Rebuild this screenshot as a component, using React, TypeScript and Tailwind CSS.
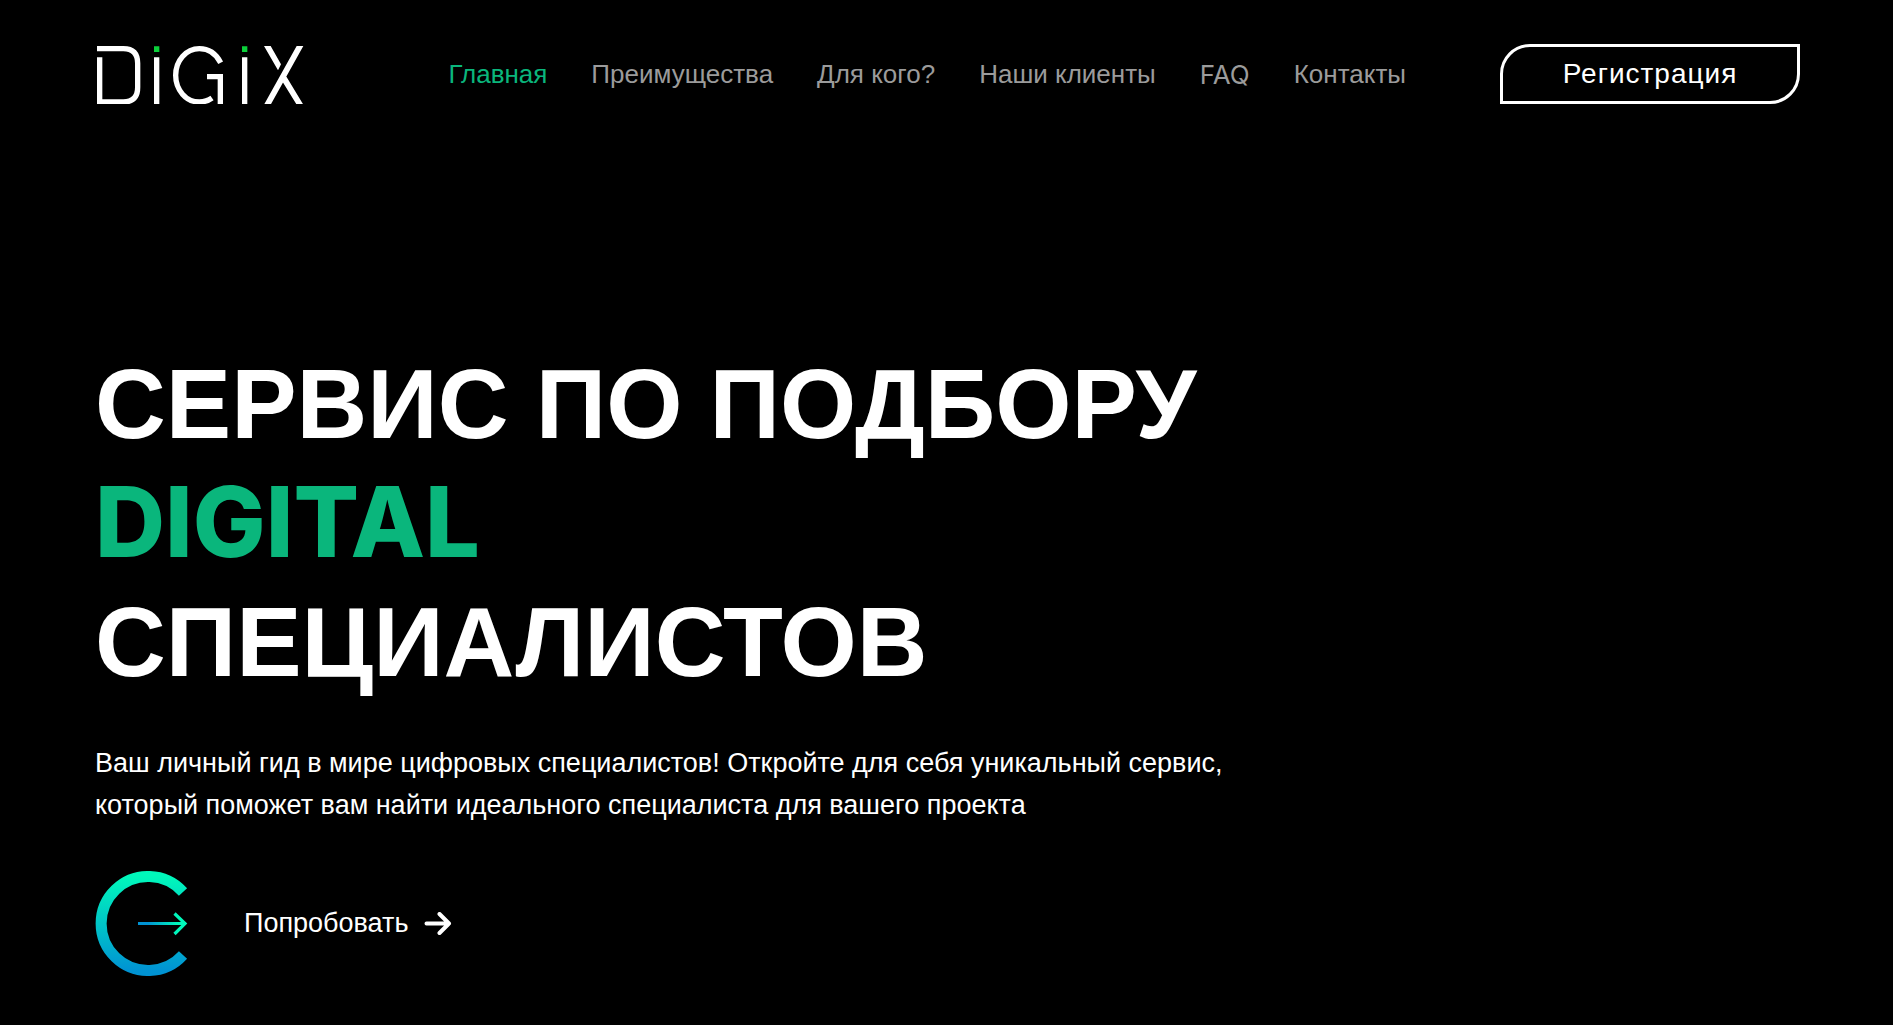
const navItems = [
  { label: "Главная", href: "#home", active: true },
  { label: "Преимущества", href: "#benefits" },
  { label: "Для кого?", href: "#audience" },
  { label: "Наши клиенты", href: "#clients" },
  { label: "FAQ", href: "#faq", latin: true },
  { label: "Контакты", href: "#contacts" },
];

function Logo() {
  return (
    <svg viewBox="45 42 630 180" className="h-[60px] w-[210px]" fill="none" role="img" aria-label="DiGiX">
      <g stroke="#fff" strokeWidth="16">
        <path d="M51 56H130Q173 56 173 100V172Q173 216 130 216H59V82" />
        <path d="M230 82V224M494 82V224" />
        <path d="M422 98C408 71 384 56 358 56C318 56 287 92 287 136C287 180 318 216 358 216C372 216 385 212 396 204" />
        <path d="M381 140H421V224" />
      </g>
      <path fill="#0bd03a" d="M222 49h16v17h-16zM486 49h16v17h-16z" />
      <path fill="#fff" d="M650 48h20L572 224h-20zM552 48h20l31 55-9 18zM613 130l57 94h-20l-47-76z" />
    </svg>
  );
}

function RingArrow() {
  return (
    <svg viewBox="0 0 93 105" className="h-[105px] w-[93px]" fill="none" aria-hidden="true">
      <defs>
        <linearGradient id="ring" x1="0" y1="0" x2="0" y2="105" gradientUnits="userSpaceOnUse">
          <stop offset="0.05" stopColor="#00f8bb" />
          <stop offset="0.95" stopColor="#0093d3" />
        </linearGradient>
        <linearGradient id="shaft" x1="43" y1="0" x2="92" y2="0" gradientUnits="userSpaceOnUse">
          <stop offset="0.2" stopColor="#0093d3" />
          <stop offset="0.8" stopColor="#00f8bb" />
        </linearGradient>
      </defs>
      <path d="M88 21A47 47 0 1 0 88 84" stroke="url(#ring)" strokeWidth="11" />
      <path d="M43 52.500H90M79.500 42.500L90 52.600L79.500 63" stroke="url(#shaft)" strokeWidth="3.200" />
    </svg>
  );
}

export default function App() {
  return (
    <div className="min-h-screen bg-black pr-[93px] pl-[95px] pt-11 font-['Liberation_Sans',Arial,sans-serif] text-white">
      <header className="flex items-center">
        <a href="#home" className="shrink-0"><Logo /></a>
        <nav className="mr-[94px] ml-auto flex gap-11 text-[26px] whitespace-nowrap">
          {navItems.map((item) => (
            <a
              key={item.href}
              href={item.href}
              className={
                item.active ? "text-[#0ab67c]" : item.latin ? "font-['Inter'] font-normal text-[#9b9b9b]" : "text-[#9b9b9b]"
              }
            >
              {item.label}
            </a>
          ))}
        </nav>
        <button className="h-[60px] w-[300px] shrink-0 rounded-tl-[30px] rounded-br-[30px] border-3 border-white text-[28px] tracking-[1px]">
          Регистрация
        </button>
      </header>

      <main className="pt-[241px]">
        <h1 className="text-[98px] leading-[119px] font-bold">
          СЕРВИС ПО ПОДБОРУ
          <br />
          <span className="font-['Inter'] text-[97px] leading-none font-extrabold text-[#0ab67c]">DIGITAL</span>
          <br />
          СПЕЦИАЛИСТОВ
        </h1>
        <p className="mt-10 max-w-[1140px] text-[27px] leading-[42px]">
          Ваш личный гид в мире цифровых специалистов! Откройте для себя уникальный сервис, который поможет вам найти
          идеального специалиста для вашего проекта
        </p>
        <div className="mt-[45px] flex items-center gap-14">
          <RingArrow />
          <a href="#try" className="flex items-center gap-4 text-[27px]">
            Попробовать
            <svg viewBox="0 0 28 24" className="h-6 w-7" fill="none" stroke="#fff" strokeWidth="4" strokeLinecap="round" strokeLinejoin="round" aria-hidden="true">
              <path d="M2.500 11.500H25M15.500 2L25 11.500L15.500 21" />
            </svg>
          </a>
        </div>
      </main>
    </div>
  );
}
